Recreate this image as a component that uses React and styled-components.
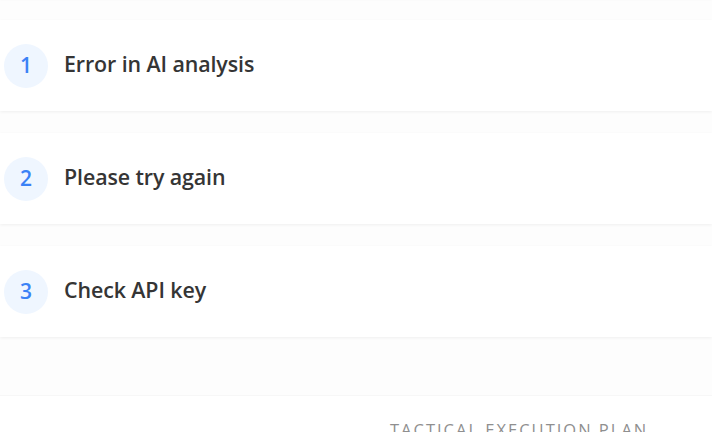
import React from "react";
import styled, { createGlobalStyle } from "styled-components";

const GlobalStyle = createGlobalStyle`
  html, body {
    margin: 0;
    padding: 0;
    background: #fdfdfd;
    overflow: hidden;
  }
  body {
    font-family: "Open Sans", "Noto Sans", sans-serif;
  }
`;

const Page = styled.div`
  width: 712px;
  height: 432px;
  overflow: hidden;
  display: flex;
  flex-direction: column;
`;

const StepList = styled.div`
  display: flex;
  flex-direction: column;
  gap: 22px;
  margin-top: -93px;
  padding-bottom: 58px;
`;

const StepCard = styled.div`
  flex: none;
  height: 91px;
  background: #ffffff;
  box-shadow: 0 1px 3px rgba(0, 0, 0, 0.06);
  display: flex;
  align-items: center;
  gap: 16px;
  padding-left: 4px;
`;

const StepNumber = styled.div`
  width: 44px;
  height: 44px;
  border-radius: 50%;
  background: #eff6ff;
  color: #3b82f6;
  display: flex;
  align-items: center;
  justify-content: center;
  font-size: 21px;
  font-weight: 600;
  padding-bottom: 2px;
  box-sizing: border-box;
`;

const StepText = styled.div`
  font-size: 21.4px;
  font-weight: 600;
  color: #353535;
  letter-spacing: -0.1px;
  padding-bottom: 4px;
`;

const PlanSection = styled.div`
  flex: 1;
  background: #ffffff;
  border-top: 1px solid #f7f7f7;
  padding: 22px 0 0 390px;
`;

const PlanTitle = styled.div`
  font-size: 16.5px;
  font-weight: 400;
  letter-spacing: 2px;
  color: #8f8f8f;
  white-space: nowrap;
`;

const steps = ["Error in AI analysis", "Please try again", "Check API key"];

export default function App() {
  return (
    <Page>
      <GlobalStyle />
      <StepList>
        <StepCard />
        {steps.map((text, i) => (
          <StepCard key={i}>
            <StepNumber>{i + 1}</StepNumber>
            <StepText>{text}</StepText>
          </StepCard>
        ))}
      </StepList>
      <PlanSection>
        <PlanTitle>TACTICAL EXECUTION PLAN</PlanTitle>
      </PlanSection>
    </Page>
  );
}
